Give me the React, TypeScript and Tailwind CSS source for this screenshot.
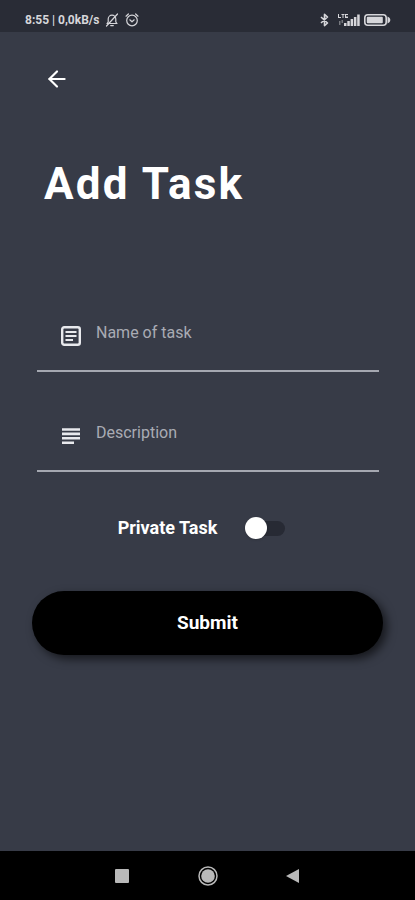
import { useState } from "react";
import type { ReactNode } from "react";
import { ArrowLeft } from "lucide-react";

function StatusBar() {
  return (
    <header className="flex h-8 items-center justify-between bg-[#292c36] pt-2 pr-6 pl-[25px] text-[#d6d6da]">
      <div className="flex items-center gap-1">
        <span className="text-xs font-bold">8:55 | 0,0kB/s</span>
        <svg className="ml-0.5 h-3.5 w-3.5" viewBox="0 0 14 14" fill="none" stroke="currentColor" strokeWidth="1.2" strokeLinecap="round" strokeLinejoin="round">
          <path d="M2 10.5h10L10.8 9V6a3.8 3.8 0 0 0-7.6 0v3L2 10.5zM5.7 12.6h2.6M1.5 13L12.5 1" />
        </svg>
        <svg className="ml-0.5 h-3.5 w-3.5" viewBox="0 0 14 14" fill="none" stroke="currentColor" strokeWidth="1.2" strokeLinecap="round" strokeLinejoin="round">
          <circle cx="7" cy="7.5" r="5.3" />
          <path d="M4.8 6.8L7 8.8l2.2-2M1 3.2L3.4 1M13 3.2L10.6 1" />
        </svg>
      </div>
      <div className="flex items-center gap-1.5">
        <svg className="h-3.5 w-3.5" viewBox="0 0 14 14" fill="none" stroke="currentColor" strokeWidth="1.6" strokeLinejoin="round">
          <path d="M4 4l6.5 6L7.5 12.6V1.4l3 2.6L4 10" />
        </svg>
        <svg className="h-3.5 w-6" viewBox="0 0 24 14" fill="currentColor">
          <path d="M1 1h1v3h2v1H1zM4.5 1h3v1H6.5v3h-1V2h-1zM8 1h3v1H9v1h2v.6H9V4h2v1H8z" />
          <path d="M2 8h1.5v4H2zM4.5 7H6v3H4.5z" opacity=".45" />
          <path d="M7 10h2.5v3H7zM10.3 8h2.5v5h-2.5zM13.6 6h2.5v7h-2.5zM16.9 4h2.5v9h-2.5zM20.2 1.5h2.5V13h-2.5z" />
        </svg>
        <svg className="-ml-1 h-3.5 w-7" viewBox="0 0 28 14">
          <rect x="1.8" y="1.8" width="21.4" height="10.4" rx="3" fill="none" stroke="currentColor" strokeWidth="1.6" />
          <rect x="3.8" y="3.8" width="16" height="6.4" rx="1" fill="currentColor" />
          <path d="M24.5 3.5c1.9.8 2.8 2 2.8 3.5s-.9 2.7-2.8 3.5z" fill="currentColor" />
        </svg>
      </div>
    </header>
  );
}

function ArticleIcon() {
  return (
    <svg className="h-[26px] w-[26px]" viewBox="0 0 26 26" fill="none" stroke="currentColor">
      <rect x="4.2" y="4.2" width="17.6" height="17.6" rx="2" strokeWidth="2.4" />
      <path d="M7.5 9h11M7.5 13h11M7.5 17H15" strokeWidth="2.2" />
    </svg>
  );
}

function SubjectIcon() {
  return (
    <svg className="h-[26px] w-[26px]" viewBox="0 0 26 26" fill="none" stroke="currentColor">
      <path d="M4 6.5h18M4 10.9h18M4 15.3h18M4 19.7h12" strokeWidth="2.6" />
    </svg>
  );
}

type FieldProps = {
  name: string;
  label: string;
  icon: ReactNode;
};

function Field({ name, label, icon }: FieldProps) {
  return (
    <div className="flex h-[71px] items-start border-b-2 border-[#a5a8b1] pl-[21px] text-[#e8e9ed]">
      <label htmlFor={name} aria-label={label} className="mt-[22px] shrink-0">
        {icon}
      </label>
      <input
        id={name}
        name={name}
        type="text"
        placeholder={label}
        className="mt-5 ml-3 h-6 min-w-0 flex-1 bg-transparent text-base text-white outline-none placeholder:text-[#a9abb4]"
      />
    </div>
  );
}

function NavigationBar() {
  return (
    <nav className="flex h-[49px] items-center justify-center gap-[65px] bg-black text-[#b9b9b9]">
      <button type="button" aria-label="Recent apps">
        <svg className="h-5 w-5" viewBox="0 0 20 20" fill="currentColor">
          <rect x="2" y="3" width="14" height="14" rx="1" />
        </svg>
      </button>
      <button type="button" aria-label="Home">
        <svg className="h-5 w-5" viewBox="0 0 20 20" fill="currentColor">
          <circle cx="10" cy="10" r="9" fill="none" stroke="currentColor" strokeWidth="1.5" />
          <circle cx="10" cy="10" r="6.8" />
        </svg>
      </button>
      <button type="button" aria-label="Back">
        <svg className="h-5 w-5" viewBox="0 0 20 20" fill="currentColor">
          <path d="M16 3v14L3 10z" />
        </svg>
      </button>
    </nav>
  );
}

export default function App() {
  const [isPrivate, setIsPrivate] = useState(false);

  return (
    <div className="flex min-h-screen flex-col bg-[#373b47] font-[Roboto,sans-serif]">
      <StatusBar />

      <main className="flex-1 px-8 pt-[34px] pb-8">
        <button type="button" aria-label="Back" className="ml-3 block text-white">
          <ArrowLeft size={26} strokeWidth={2} />
        </button>

        <h1 className="mt-16 ml-3 text-[44px] leading-[56px] font-bold tracking-wider text-white">Add Task</h1>

        <form onSubmit={(e) => e.preventDefault()}>
          <div className="mt-[89px] flex flex-col gap-[29px] pr-1 pl-[5px]">
            <Field name="task-name" label="Name of task" icon={<ArticleIcon />} />
            <Field name="task-description" label="Description" icon={<SubjectIcon />} />
          </div>

          <label className="mt-[42px] flex items-center justify-center gap-7 pr-3 text-lg leading-7 font-bold text-white">
            Private Task
            <span className="relative flex h-6 w-10 items-center">
              <input
                type="checkbox"
                role="switch"
                checked={isPrivate}
                onChange={(e) => setIsPrivate(e.target.checked)}
                className="peer ml-1 h-[15px] w-9 appearance-none rounded-full bg-[#272a34] checked:bg-[#5d6479]"
              />
              <span className="pointer-events-none absolute left-0 h-[22px] w-[22px] rounded-full bg-white shadow transition-transform peer-checked:translate-x-4" />
            </span>
          </label>

          <button
            type="submit"
            className="mt-[49px] h-16 w-full rounded-full bg-black text-[19px] font-bold text-white shadow-[4px_4px_10px_rgba(0,0,0,0.6)]"
          >
            Submit
          </button>
        </form>
      </main>

      <NavigationBar />
    </div>
  );
}
